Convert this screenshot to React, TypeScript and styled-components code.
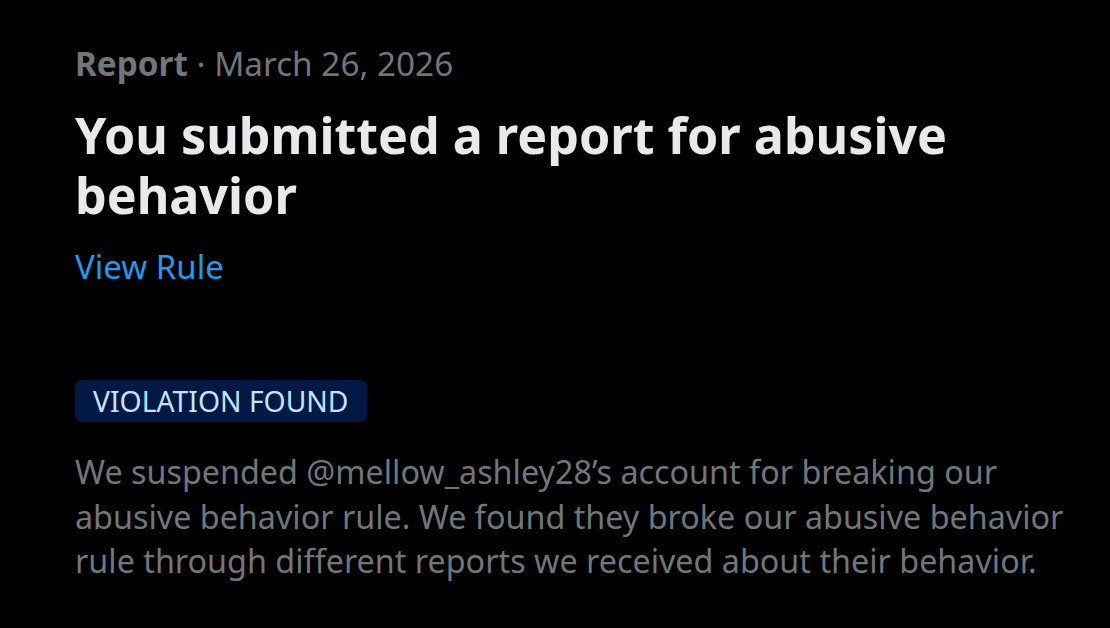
import React from "react";
import styled, { createGlobalStyle } from "styled-components";

const Global = createGlobalStyle`
  html, body { margin: 0; padding: 0; background: #000; }
  body { font-family: "Noto Sans", "Open Sans", sans-serif; }
`;

const Page = styled.div`
  width: 1110px;
  height: 628px;
  background: #000;
  box-sizing: border-box;
  padding: 41px 30px 0 75px;
  display: flex;
  flex-direction: column;
  overflow: hidden;
`;

const Meta = styled.div`
  font-size: 33.3px;
  line-height: 44px;
  color: #71767b;
`;

const MetaStrong = styled.span`
  font-weight: 700;
`;

const Title = styled.h1`
  margin: 20px 0 0;
  font-size: 50.2px;
  line-height: 60px;
  font-weight: 700;
  color: #e7e9ea;
  max-width: 960px;
`;

const Link = styled.a`
  margin-top: 20px;
  font-size: 33px;
  line-height: 44px;
  color: #1d9bf0;
  text-decoration: none;
  align-self: flex-start;
`;

const Badge = styled.span`
  margin-top: 91px;
  align-self: flex-start;
  background: #031945;
  color: #bfe6ff;
  font-size: 28.3px;
  line-height: 42px;
  padding: 0 18px;
  border-radius: 7px;
`;

const Body = styled.p`
  margin: 27px 0 0;
  font-size: 32.3px;
  line-height: 44.5px;
  color: #71767b;
  max-width: 1000px;
`;

export default function App() {
  return (
    <>
      <Global />
      <Page>
        <Meta>
          <MetaStrong>Report</MetaStrong> · March 26, 2026
        </Meta>
        <Title>You submitted a report for abusive behavior</Title>
        <Link href="#">View Rule</Link>
        <Badge>VIOLATION FOUND</Badge>
        <Body>
          We suspended @mellow_ashley28’s account for breaking our abusive
          behavior rule. We found they broke our abusive behavior rule through
          different reports we received about their behavior.
        </Body>
      </Page>
    </>
  );
}
